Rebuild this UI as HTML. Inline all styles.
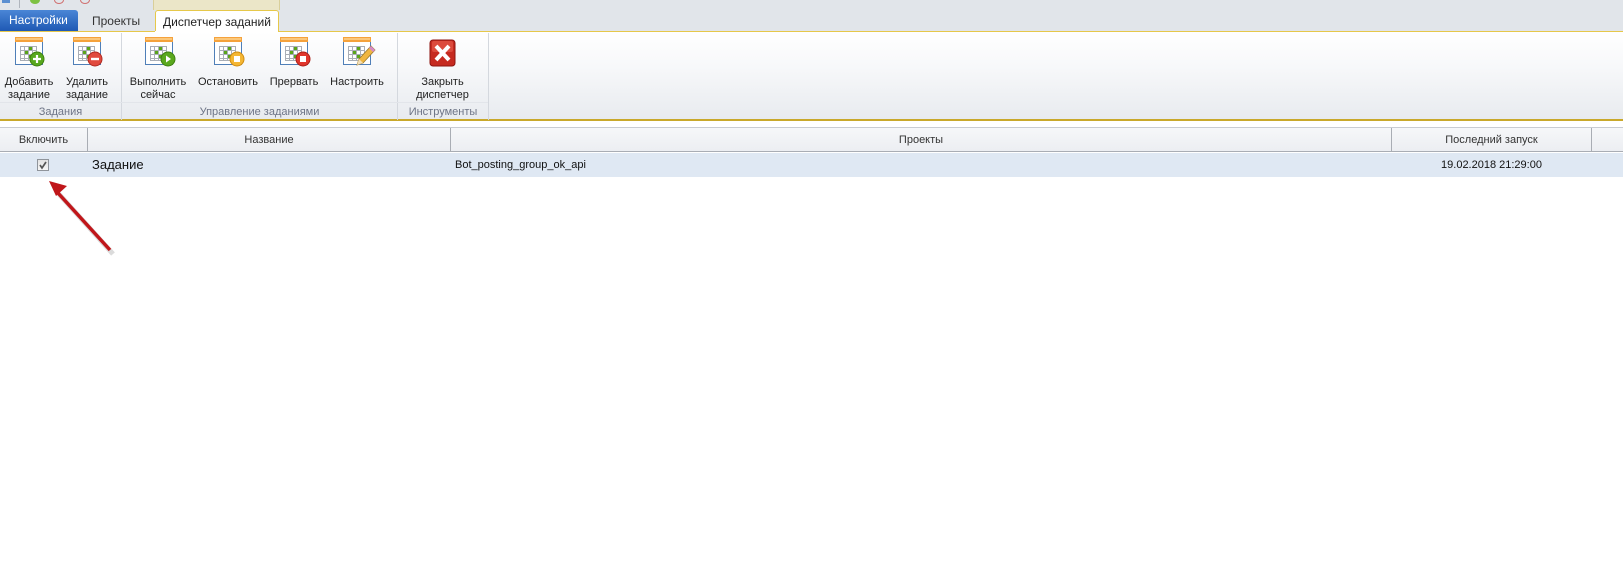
<!DOCTYPE html>
<html><head><meta charset="utf-8"><style>
*{margin:0;padding:0;box-sizing:border-box}
body{width:1623px;height:570px;background:#fff;position:relative;overflow:hidden;font-family:"Liberation Sans",Tahoma,sans-serif;font-size:11px;color:#333}
.a{position:absolute}
.lbl{position:absolute;text-align:center;line-height:13px;color:#222;white-space:nowrap}
.grp{position:absolute;top:106px;text-align:center;color:#6d7486;font-size:11px}
.sep{position:absolute;top:33px;width:1px;height:87px;background:#d4d8de}
.hd{position:absolute;top:128px;height:24px;line-height:24px;text-align:center;color:#333}
.vl{position:absolute;top:128px;width:1px;height:24px;background:#a9adb4}
</style></head><body>
<div class="a" style="left:0;top:0;width:1623px;height:31px;background:#e1e5ea"></div>
<div class="a" style="left:153px;top:0;width:127px;height:10px;background:#ebe6c8;border-left:1px solid #d9cf9a;border-right:1px solid #d9cf9a"></div>
<div class="a" style="left:2px;top:0;width:8px;height:3px;background:#5b8fd1"></div>
<div class="a" style="left:19px;top:0;width:1px;height:8px;background:#b0b5bd"></div>
<div class="a" style="left:30px;top:-4px;width:10px;height:8px;border-radius:50%;background:#7cc142"></div>
<div class="a" style="left:54px;top:-4px;width:10px;height:8px;border-radius:50%;border:1px solid #d07070"></div>
<div class="a" style="left:80px;top:-4px;width:10px;height:8px;border-radius:50%;border:1px solid #d07070"></div>
<div class="a" style="left:0;top:10px;width:78px;height:21px;background:linear-gradient(#4a86d6,#1f59b4);border-radius:0 3px 0 0;color:#fff;font-size:12px;line-height:21px;padding-left:9px">Настройки</div>
<div class="a" style="left:92px;top:10px;height:21px;line-height:23px;font-size:12px;color:#333">Проекты</div>
<div class="a" style="left:155px;top:10px;width:124px;height:23px;background:#fff;border:1px solid #e6c84a;border-bottom:none;border-radius:3px 3px 0 0;text-align:center;line-height:22px;font-size:12px;color:#222">Диспетчер заданий</div>
<div class="a" style="left:0;top:31px;width:1623px;height:90px;background:linear-gradient(#fff 0%,#f7f8fa 40%,#e8ebef 100%);border-top:1px solid #e6c84a;border-bottom:2px solid #c9a82a"></div>
<div class="a" style="left:155px;top:31px;width:123px;height:2px;background:#fff"></div>
<div class="sep" style="left:121px"></div>
<div class="sep" style="left:397px"></div>
<div class="sep" style="left:488px"></div>
<div class="a" style="left:0;top:102px;width:488px;height:1px;background:#e2e5ea"></div>

<svg class="a" style="left:0;top:30px" width="500" height="45" viewBox="0 0 500 45">
<defs>
<g id="cal">
<rect x="0.5" y="2.5" width="27" height="25" fill="#fff" stroke="#4f7fb8"/>
<rect x="0" y="0" width="28" height="5" fill="#f5a23c"/>
<rect x="1" y="1" width="26" height="2" fill="#fbc77a"/>
<g stroke="#a9aeb6" fill="none" stroke-width="1">
<rect x="5.5" y="9.5" width="16" height="14"/>
<path d="M9.5 9.5v14M13.5 9.5v14M17.5 9.5v14M5.5 13.5h16M5.5 17.5h16M5.5 21.5h16"/>
</g>
<rect x="10" y="14" width="3" height="3" fill="#5aa51a"/>
<rect x="14" y="18" width="3" height="3" fill="#5aa51a"/>
<rect x="14" y="10" width="3" height="3" fill="#5aa51a"/>
</g>
</defs>
<use href="#cal" x="15" y="7"/>
<circle cx="37" cy="29" r="7" fill="#58a81e" stroke="#3f8010"/><path d="M33 29h8M37 25v8" stroke="#fff" stroke-width="2.2"/>
<use href="#cal" x="73" y="7"/>
<circle cx="95" cy="29" r="7" fill="#e14a3e" stroke="#b22a22"/><path d="M91 29h8" stroke="#fff" stroke-width="2.4"/>
<use href="#cal" x="145" y="7"/>
<circle cx="168" cy="29" r="7" fill="#5aa81e" stroke="#3f8010"/><path d="M166 25.5l5 3.5-5 3.5z" fill="#fff"/>
<use href="#cal" x="214" y="7"/>
<circle cx="237" cy="29" r="7" fill="#f4b633" stroke="#d08c10"/><rect x="234" y="26" width="6" height="6" fill="#fff"/>
<use href="#cal" x="280" y="7"/>
<circle cx="303" cy="29" r="7" fill="#e0362c" stroke="#ad2018"/><rect x="300" y="26" width="6" height="6" fill="#fff"/>
<use href="#cal" x="343" y="7"/>
<path d="M357 35l2-6 12-13 4 4-12 13z" fill="#f0b640" stroke="#9c7a2a" stroke-width="0.8"/><path d="M369 18l4 4 2-2-4-4z" fill="#d68ac8"/><path d="M357 35l2-6 4 4z" fill="#f5e0b8"/>
<rect x="430" y="10" width="25" height="26" rx="3" fill="#c62a20" stroke="#8e1510"/>
<rect x="432" y="11" width="21" height="11" rx="2" fill="#dc4a3c"/>
<path d="M436 16l13 14M449 16l-13 14" stroke="#fff" stroke-width="4"/>
</svg>

<div class="lbl" style="left:0;width:58px;top:76px">Добавить<br>задание</div>
<div class="lbl" style="left:58px;width:58px;top:76px">Удалить<br>задание</div>
<div class="lbl" style="left:126px;width:64px;top:76px">Выполнить<br>сейчас</div>
<div class="lbl" style="left:196px;width:64px;top:76px">Остановить</div>
<div class="lbl" style="left:266px;width:56px;top:76px">Прервать</div>
<div class="lbl" style="left:326px;width:62px;top:76px">Настроить</div>
<div class="lbl" style="left:405px;width:75px;top:76px">Закрыть<br>диспетчер</div>
<div class="grp" style="left:0;width:121px">Задания</div>
<div class="grp" style="left:122px;width:275px">Управление заданиями</div>
<div class="grp" style="left:398px;width:90px">Инструменты</div>

<div class="a" style="left:0;top:127px;width:1623px;height:25px;background:linear-gradient(#f6f7f9,#eceef2);border-top:1px solid #c9ccd2;border-bottom:1px solid #a9adb4"></div>
<div class="hd" style="left:0;width:87px">Включить</div>
<div class="vl" style="left:87px"></div>
<div class="hd" style="left:88px;width:362px">Название</div>
<div class="vl" style="left:450px"></div>
<div class="hd" style="left:451px;width:940px">Проекты</div>
<div class="vl" style="left:1391px"></div>
<div class="hd" style="left:1392px;width:199px">Последний запуск</div>
<div class="vl" style="left:1591px"></div>
<div class="a" style="left:0;top:153px;width:1623px;height:24px;background:#dfe8f3"></div>
<div class="a" style="left:37px;top:159px;width:12px;height:12px;border:1px solid #8f949b;background:linear-gradient(#e2e2e2,#f6f6f6)"></div>
<svg class="a" style="left:37px;top:159px" width="12" height="12"><path d="M3 6l2 3 4-6" stroke="#555" stroke-width="1.7" fill="none"/></svg>
<div class="a" style="left:92px;top:153px;line-height:24px;font-size:13px;color:#111">Задание</div>
<div class="a" style="left:455px;top:153px;line-height:24px;color:#111">Bot_posting_group_ok_api</div>
<div class="a" style="left:1392px;top:153px;width:199px;text-align:center;line-height:24px;color:#111">19.02.2018 21:29:00</div>
<svg class="a" style="left:0;top:0" width="200" height="300">
<line x1="113" y1="254" x2="58" y2="193" stroke="#999" stroke-width="5" opacity="0.35"/>
<line x1="110" y1="250" x2="58" y2="193" stroke="#c0161a" stroke-width="3.5"/>
<path d="M49 181l18 5-11 10z" fill="#c0161a"/>
</svg>
</body></html>
